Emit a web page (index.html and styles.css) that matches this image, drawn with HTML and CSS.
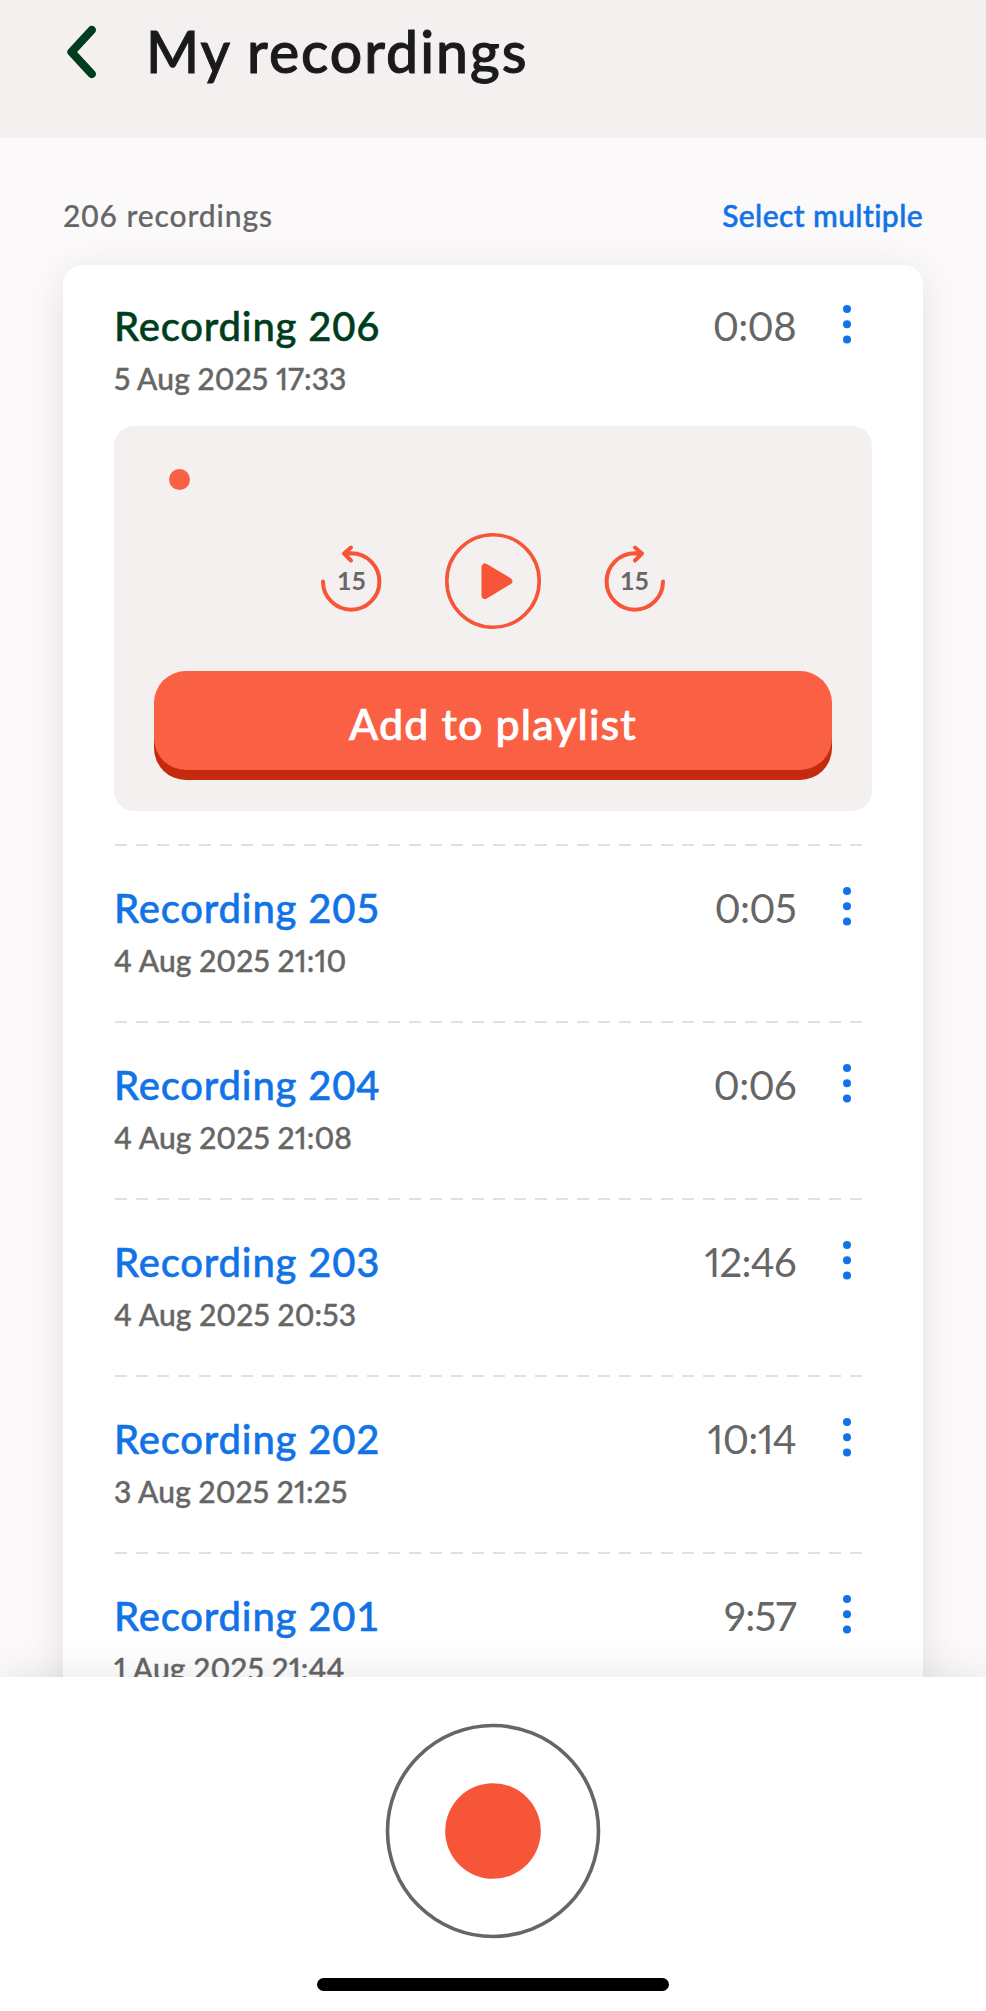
FILE: index.html
```html
<!DOCTYPE html>
<html lang="en">
<head>
<meta charset="utf-8">
<title>My recordings</title>
<link rel="stylesheet" href="styles.css">
</head>
<body>
<div class="app">
  <header class="header">
    <svg class="back" width="30" height="56" viewBox="0 0 30 56"><path d="M24.800 6 4.500 28 24.800 50"/></svg>
    <h1 class="title">My recordings</h1>
  </header>
  <main class="content">
    <div class="toolbar"><span class="count">206 recordings</span><a class="select">Select multiple</a></div>
    <section class="card">
      <article class="row row-open">
        <div class="summary">
          <div class="info"><h2 class="name">Recording 206</h2><p class="date">5 Aug 2025 17:33</p></div>
          <span class="time">0:08</span>
          <svg class="more" width="10" height="40" viewBox="0 0 10 40"><circle cx="5" cy="5" r="4"/><circle cx="5" cy="20.2" r="4"/><circle cx="5" cy="35.4" r="4"/></svg>
        </div>
        <div class="player">
          <div class="track"><span class="thumb"></span></div>
          <div class="controls">
            <svg class="skip" width="64" height="72" viewBox="0 0 64 72"><path d="M4 38.500A28.200 28.200 0 1 0 32.200 10.300L25 10.500M32 4.500 25 10.500 32 17.500"/><text x="32.500" y="47">15</text></svg>
            <svg class="play" width="96" height="96" viewBox="0 0 96 96"><circle cx="48" cy="48" r="46.200"/><path d="M40 34V62.500L63.800 48.200Z"/></svg>
            <svg class="skip" width="64" height="72" viewBox="0 0 64 72"><path d="M60 38.500A28.200 28.200 0 1 1 31.800 10.300L39 10.500M32 4.500 39 10.500 32 17.500"/><text x="31.500" y="47">15</text></svg>
          </div>
          <button class="add">Add to playlist</button>
        </div>
      </article>
      <article class="row">
        <div class="summary">
          <div class="info"><h2 class="name">Recording 205</h2><p class="date">4 Aug 2025 21:10</p></div>
          <span class="time">0:05</span>
          <svg class="more" width="10" height="40" viewBox="0 0 10 40"><circle cx="5" cy="5" r="4"/><circle cx="5" cy="20.2" r="4"/><circle cx="5" cy="35.4" r="4"/></svg>
        </div>
      </article>
      <article class="row">
        <div class="summary">
          <div class="info"><h2 class="name">Recording 204</h2><p class="date">4 Aug 2025 21:08</p></div>
          <span class="time">0:06</span>
          <svg class="more" width="10" height="40" viewBox="0 0 10 40"><circle cx="5" cy="5" r="4"/><circle cx="5" cy="20.2" r="4"/><circle cx="5" cy="35.4" r="4"/></svg>
        </div>
      </article>
      <article class="row">
        <div class="summary">
          <div class="info"><h2 class="name">Recording 203</h2><p class="date">4 Aug 2025 20:53</p></div>
          <span class="time">12:46</span>
          <svg class="more" width="10" height="40" viewBox="0 0 10 40"><circle cx="5" cy="5" r="4"/><circle cx="5" cy="20.2" r="4"/><circle cx="5" cy="35.4" r="4"/></svg>
        </div>
      </article>
      <article class="row">
        <div class="summary">
          <div class="info"><h2 class="name">Recording 202</h2><p class="date">3 Aug 2025 21:25</p></div>
          <span class="time">10:14</span>
          <svg class="more" width="10" height="40" viewBox="0 0 10 40"><circle cx="5" cy="5" r="4"/><circle cx="5" cy="20.2" r="4"/><circle cx="5" cy="35.4" r="4"/></svg>
        </div>
      </article>
      <article class="row">
        <div class="summary">
          <div class="info"><h2 class="name">Recording 201</h2><p class="date">1 Aug 2025 21:44</p></div>
          <span class="time">9:57</span>
          <svg class="more" width="10" height="40" viewBox="0 0 10 40"><circle cx="5" cy="5" r="4"/><circle cx="5" cy="20.2" r="4"/><circle cx="5" cy="35.4" r="4"/></svg>
        </div>
      </article>
    </section>
  </main>
  <footer class="footer">
    <svg class="record" width="216" height="216" viewBox="0 0 216 216"><circle class="ring" cx="108" cy="108" r="105.500"/><circle class="disc" cx="108" cy="108" r="47.800"/></svg>
    <div class="home"></div>
  </footer>
</div>
</body>
</html>
```
FILE: styles.css
```css
* { box-sizing: border-box; margin: 0; padding: 0; }
body { font-family: Lato, "Open Sans", sans-serif; font-weight: 500; color: #666; background: #fbf9fa; }
.app { height: 2011px; display: flex; flex-direction: column; overflow: hidden; }
.header { flex: none; height: 138px; background: #f4f0ef; display: flex; align-items: flex-start; padding: 24px 0 0 67px; gap: 49px; }
.back { fill: none; stroke: #003c1e; stroke-width: 8.4; stroke-linecap: round; stroke-linejoin: round; }
.title { font-size: 57px; line-height: 68px; margin-top: -7px; font-weight: 500; color: #1a1a1a; letter-spacing: 2px; -webkit-text-stroke: 1px #1a1a1a; }
.content { flex: 1; min-height: 0; overflow: hidden; padding: 59px 63px 0; }
.toolbar { display: flex; justify-content: space-between; font-size: 30px; line-height: 36px; height: 68px; }
.count { letter-spacing: .9px; -webkit-text-stroke: .2px #666; }
.select { color: #1273e6; letter-spacing: .4px; -webkit-text-stroke: .5px #1273e6; }
.card { background: #fff; border-radius: 20px; box-shadow: 0 8px 40px rgba(0, 0, 0, .1); padding: 0 51px; height: 1500px; }
.row { height: 177px; padding-top: 38px; background: repeating-linear-gradient(90deg, #e0e0e0 0 12px, transparent 12px 21px) 1px 100% / 748px 2px no-repeat; }
.row-open { height: 581px; padding-top: 37px; }
.summary { display: flex; align-items: flex-start; padding-right: 20px; }
.info { flex: 1; }
.name { font-size: 40px; line-height: 48px; font-weight: 500; color: #1273e6; letter-spacing: .8px; -webkit-text-stroke: .5px currentColor; }
.row-open .name { color: #003c1e; }
.date { font-size: 30px; line-height: 36px; margin-top: 10px; font-variant-numeric: proportional-nums; letter-spacing: .1px; -webkit-text-stroke: .4px #666; }
.time { font-size: 40px; line-height: 48px; font-weight: 400; margin-right: 46px; font-variant-numeric: proportional-nums; letter-spacing: -.7px; }
.more { fill: #1273e6; margin-top: 2px; }
.player { margin-top: 30px; height: 385px; width: 758px; border-radius: 20px; background: #f4f0ef; padding: 43px 40px 0; }
.track { height: 21px; padding-left: 15px; }
.thumb { display: block; width: 21px; height: 21px; border-radius: 50%; background: #fa6044; }
.controls { height: 96px; margin-top: 43px; display: flex; justify-content: center; align-items: center; gap: 62px; }
.skip { fill: none; stroke: #f65637; stroke-width: 4; stroke-linecap: round; stroke-linejoin: round; margin-bottom: 5px; }
.skip text { fill: #666; stroke: none; font-size: 25px; font-weight: 700; text-anchor: middle; }
.play { fill: none; stroke: #f65637; stroke-width: 3.6; }
.play path { fill: #f65637; stroke-width: 7; stroke-linejoin: round; }
.add { display: block; width: 678px; height: 99px; margin-top: 42px; border: 0; border-radius: 32px; background: #fa6044; box-shadow: 0 10px 0 #c5290e; color: #fff; font: 500 43px/52px Lato, "Open Sans", sans-serif; letter-spacing: 1.1px; -webkit-text-stroke: .7px #fff; padding-top: 6px; }
.footer { flex: none; position: relative; height: 334px; background: #fff; box-shadow: 0 0 40px rgba(0, 0, 0, .1); display: flex; flex-direction: column; align-items: center; padding-top: 46px; }
.record { fill: none; }
.ring { stroke: #666; stroke-width: 3.6; }
.disc { fill: #f65637; }
.home { width: 352px; height: 13px; border-radius: 7px; background: #000; margin-top: 39px; }
```
